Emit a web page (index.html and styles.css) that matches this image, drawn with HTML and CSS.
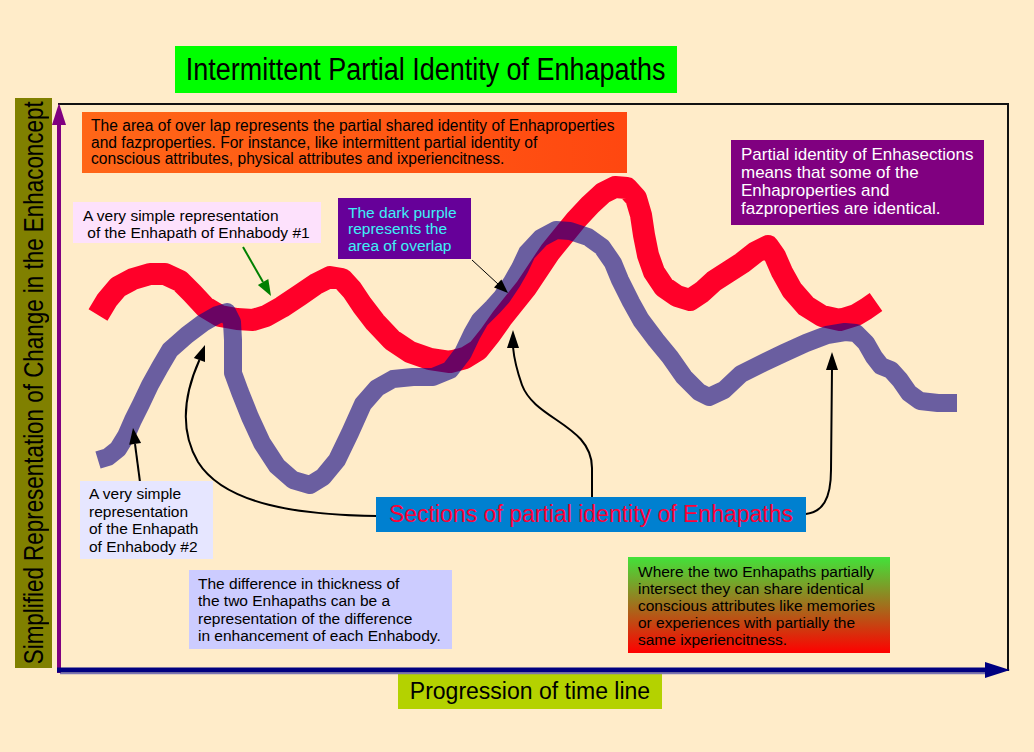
FILE: index.html
```html
<!DOCTYPE html>
<html lang="en">
<head>
<meta charset="utf-8">
<title>Intermittent Partial Identity of Enhapaths</title>
<link rel="stylesheet" href="styles.css">
</head>
<body>
<div class="page">
  <svg class="drawing" width="1034" height="752" viewBox="0 0 1034 752" xmlns="http://www.w3.org/2000/svg">
    <!-- frame -->
    <polyline class="frame" points="58,104 1008,104 1008,671"/>
    <!-- y axis -->
    <line class="y-axis" x1="59" y1="673" x2="59" y2="122"/>
    <polygon class="y-axis-head" points="59,103 52,125 66,125"/>
    <!-- x axis -->
    <line class="x-axis-shadow" x1="60" y1="673.5" x2="990" y2="673.5"/>
    <line class="x-axis" x1="57" y1="670" x2="988" y2="670"/>
    <polygon class="x-axis-head" points="1010,670 985,662 985,678"/>

    <!-- Enhapath #1 (red) -->
    <polyline class="path-red" points="98,315 107,300 118,287 133,279 150,274 165,274 180,281 192,293 205,307 220,316 237,319 253,320 266,316 282,307 300,295 316,284 330,277 342,279 352,290 362,305 375,322 392,340 410,352 430,359 450,362 465,358 478,350 490,335 502,318 514,303 526,288 538,270 550,252 563,236 576,220 590,205 603,193 615,187 627,188 636,198 641,215 644,235 648,255 654,272 664,287 677,296 690,300 702,292 714,281 728,272 742,263 756,252 768,246 775,256 782,272 792,290 806,306 822,316 840,320 856,315 866,309 876,302"/>
    <!-- Enhapath #2 (translucent blue-purple) -->
    <polyline class="path-blue" points="98,460 108,457 118,449 126,436 133,420 141,404 150,385 160,367 170,350 187,335 203,323 217,315 227,312 232,322 233,340 233,373 240,392 250,417 262,443 277,466 293,480 310,485 323,477 337,460 350,433 363,404 377,388 393,379 413,377 433,377 450,370 463,353 472,334 480,320 493,307 502,297 512,282 520,268 527,253 541,238 556,230 570,231 588,237 602,247 613,263 620,280 631,302 641,320 656,340 670,357 684,377 699,392 709,397 724,390 741,374 763,363 784,353 806,343 827,335 845,332 856,333 866,343 874,357 881,366 891,370 900,380 909,393 920,401 938,403 957,403"/>

    <!-- green arrow to path #1 -->
    <line class="arrow-green" x1="243" y1="247" x2="263" y2="282"/>
    <polygon class="head-green" points="271,296 268.3,279.1 257.9,285.1"/>
    <!-- thin arrow from dark purple note -->
    <line class="arrow-thin" x1="472" y1="260" x2="498" y2="284"/>
    <polygon class="head-black" points="508,293 501.4,279.4 494,287.6"/>
    <!-- arrow to path #2 -->
    <line class="arrow-black" x1="140" y1="482" x2="135" y2="444"/>
    <polygon class="head-black" points="133,428 141.1,443.1 129.2,444.7"/>
    <!-- arrows from the sections label -->
    <path class="arrow-black" d="M377,516 C300,515 225,505 198,462 C178,428 186,390 199.4,360"/>
    <polygon class="head-black" points="205,345 205,362.1 193.8,357.9"/>
    <path class="arrow-black" d="M592,497 L592,468 C592,425 535,420 522,385 C516,368 514,358 513,347"/>
    <polygon class="head-black" points="513,330 507,348 519,348"/>
    <path class="arrow-black" d="M806,514 C822,512 831,500 831,470 L832,368"/>
    <polygon class="head-black" points="832,352 826,370 838,370"/>
  </svg>

  <header class="title-row">
    <h1 class="title"><span class="title-text">Intermittent Partial Identity of Enhapaths</span></h1>
  </header>

  <div class="chart-row">
    <div class="ylabel"><span class="ylabel-text">Simplified Representation of Change in the Enhaconcept</span></div>
  </div>

  <footer class="xlabel-row">
    <div class="xlabel">Progression of time line</div>
  </footer>

  <div class="note note-orange">The area of over lap represents the partial shared identity of Enhaproperties<br>and fazproperties. For instance, like intermittent partial identity of<br>conscious attributes, physical attributes and ixperiencitness.</div>

  <div class="note note-purple">Partial identity of Enhasections<br>means that some of the<br>Enhaproperties and<br>fazproperties are identical.</div>

  <div class="note note-pink">A very simple representation<br>&nbsp;of the Enhapath of Enhabody #1</div>

  <div class="note note-overlap">The dark purple<br>represents the<br>area of overlap</div>

  <div class="note note-lavender">A very simple<br>representation<br>of the Enhapath<br>of Enhabody #2</div>

  <div class="note note-periwinkle">The difference in thickness of<br>the two Enhapaths can be a<br>representation of the difference<br>in enhancement of each Enhabody.</div>

  <div class="note note-sections">Sections of partial identity of Enhapaths</div>

  <div class="note note-gradient">Where the two Enhapaths partially<br>intersect they can share identical<br>conscious attributes like memories<br>or experiences with partially the<br>same ixperiencitness.</div>
</div>
</body>
</html>
```

FILE: styles.css
```css
* {
  box-sizing: border-box;
}

body {
  margin: 0;
  background: #ffecc9;
  font-family: "Liberation Sans", Arial, Helvetica, sans-serif;
  color: #000;
}

.page {
  position: relative;
  width: 1034px;
  height: 752px;
  padding-top: 46px;
  overflow: hidden;
}

/* drawing layer: axes, paths and arrows */
.drawing {
  position: absolute;
  left: 0;
  top: 0;
}

.frame {
  fill: none;
  stroke: #111;
  stroke-width: 2;
}

.y-axis {
  stroke: #800080;
  stroke-width: 4;
}

.y-axis-head {
  fill: #800080;
}

.x-axis {
  stroke: #000080;
  stroke-width: 5;
}

.x-axis-shadow {
  stroke: #7a74b4;
  stroke-width: 1.5;
}

.x-axis-head {
  fill: #000080;
}

.path-red {
  fill: none;
  stroke: #ff0029;
  stroke-width: 22;
  stroke-linejoin: round;
  stroke-linecap: butt;
}

.path-blue {
  fill: none;
  stroke: #0f0787;
  stroke-opacity: 0.62;
  stroke-width: 18;
  stroke-linejoin: round;
  stroke-linecap: butt;
}

.arrow-green {
  stroke: #008000;
  stroke-width: 2;
}

.head-green {
  fill: #008000;
}

.arrow-black {
  fill: none;
  stroke: #000;
  stroke-width: 2;
}

.arrow-thin {
  stroke: #000;
  stroke-width: 1;
}

.head-black {
  fill: #000;
}

/* title */
.title-row {
  padding-left: 175px;
}

.title {
  margin: 0;
  width: 502px;
  height: 47px;
  background: #00ff00;
  display: flex;
  justify-content: center;
  align-items: center;
  font-size: 31px;
  font-weight: normal;
  line-height: 47px;
  white-space: nowrap;
}

.title-text {
  display: inline-block;
  transform: scaleX(0.87);
}

/* y axis label */
.chart-row {
  margin-top: 5px;
  height: 570px;
  padding-left: 15px;
  display: flex;
}

.ylabel {
  width: 37px;
  height: 570px;
  background: #808000;
  display: flex;
  justify-content: center;
  align-items: center;
}

.ylabel-text {
  writing-mode: vertical-rl;
  transform: rotate(180deg) scaleY(0.8);
  font-size: 28px;
  line-height: 37px;
  white-space: nowrap;
}

/* x axis label */
.xlabel-row {
  margin-top: 6px;
  padding-left: 398px;
}

.xlabel {
  width: 264px;
  height: 35px;
  background: #b4d200;
  font-size: 23px;
  line-height: 35px;
  text-align: center;
  white-space: nowrap;
}

/* callout notes on the diagram */
.note {
  position: absolute;
  font-size: 15.5px;
  line-height: 17.5px;
  white-space: nowrap;
}

.note-orange {
  left: 82px;
  top: 112px;
  width: 545px;
  height: 61px;
  padding: 6px 0 0 9px;
  font-size: 15.6px;
  line-height: 16.7px;
  background: linear-gradient(90deg, #ff6618 0%, #ff5a14 50%, #ff4710 100%);
}

.note-purple {
  left: 731px;
  top: 140px;
  width: 253px;
  height: 85px;
  padding: 5.5px 0 0 10px;
  font-size: 17px;
  line-height: 18.3px;
  background: #800080;
  color: #fff;
}

.note-pink {
  left: 73px;
  top: 202px;
  width: 248px;
  height: 41px;
  padding: 4.5px 0 0 10px;
  line-height: 17.7px;
  background: #fde1fc;
}

.note-overlap {
  left: 338px;
  top: 198px;
  width: 133px;
  height: 61px;
  padding: 6.5px 0 0 10px;
  line-height: 16.7px;
  background: #660099;
  color: #3ef0f6;
}

.note-lavender {
  left: 80px;
  top: 481px;
  width: 133px;
  height: 78px;
  padding: 4px 0 0 9px;
  line-height: 17.6px;
  background: #e6e6ff;
}

.note-periwinkle {
  left: 189px;
  top: 570px;
  width: 263px;
  height: 79px;
  padding: 5px 0 0 9px;
  line-height: 17.4px;
  background: #ccccff;
}

.note-sections {
  left: 376px;
  top: 497px;
  width: 430px;
  height: 35px;
  font-size: 23px;
  line-height: 35px;
  text-align: center;
  background: #0080d0;
  color: #ff0037;
}

.note-gradient {
  left: 628px;
  top: 557px;
  width: 262px;
  height: 96px;
  padding: 5.5px 0 0 10px;
  line-height: 17.2px;
  background: linear-gradient(180deg, #42e23a 0%, #ff0000 100%);
}
```
